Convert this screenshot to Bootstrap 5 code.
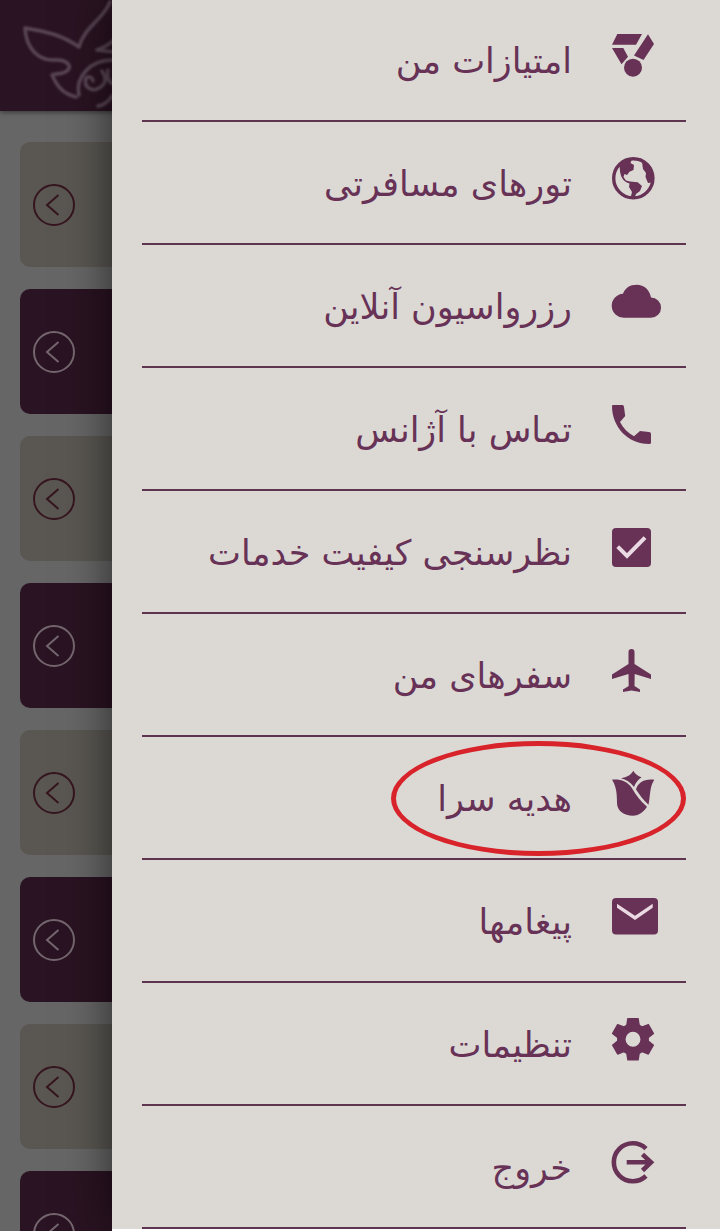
<!DOCTYPE html>
<html lang="fa">
<head>
<meta charset="utf-8">
<meta name="viewport" content="width=device-width, initial-scale=1">
<title>منو</title>
<link rel="stylesheet" href="https://cdn.jsdelivr.net/npm/bootstrap@5.3.0/dist/css/bootstrap.min.css">
<style>
:root { --plum: #673256; --plum-dim: #2a1322; }
body { background: #666; font-family: "DejaVu Sans", sans-serif; }
.app-shell { min-height: 100vh; }
.backdrop-page { inset: 0; }
.app-header { height: 111px; background: var(--plum-dim); box-shadow: 0 1px 5px #333; }
.tile-list { padding: 31px 20px 0; gap: 22px; }
.tile { height: 125px; padding: 0 13px; border-radius: 10px; background: #5a5752; color: #35151f; }
.tile:nth-child(even) { background: var(--plum-dim); color: #74666e; }
.drawer { margin-left: 112px; padding: 0 34px 0 30px; background: #dcd9d5; border-bottom: 2px solid #fff; box-shadow: 0 0 44px rgba(0,0,0,.6); }
.menu-list { margin-top: -1px; }
.menu-row { height: 123px; gap: 40px; border-bottom: 2px solid #5d3550; color: var(--plum); font-size: 35px; line-height: 50px; }
.menu-text { padding-top: 3px; }
.menu-icon { width: 74px; }
.menu-icon svg { overflow: visible; }
.marker-ring { top: 4px; right: 0; width: 295px; height: 115px; border: 5px solid #d8232a; border-radius: 50%; pointer-events: none; }
</style>
</head>
<body>
<svg class="d-none">
  <symbol id="back" viewBox="0 0 42 42"><g fill="none" stroke="currentColor" stroke-width="2"><circle cx="21" cy="21" r="20"/><path d="M25.500 11 14 21l11.500 10"/></g></symbol>
</svg>
<div class="app-shell position-relative overflow-hidden">
  <div class="backdrop-page position-absolute overflow-hidden">
    <header class="app-header">
      <svg width="130" height="111" viewBox="0 0 130 111" aria-hidden="true">
        <defs><filter id="glow"><feGaussianBlur stdDeviation="1.200"/></filter></defs>
        <g fill="none" stroke="#5a4756" stroke-width="3.500" stroke-linecap="round" stroke-linejoin="round" filter="url(#glow)">
          <path d="M110 2C104 19 84 27 79 47 62 35 48 32 25 28 26 48 38 61 55 60 68 59 74 68 65 72 60 75 53 73 52 75 58 88 64 94 76 97"/>
          <path d="M79 95C75 78 90 59 114 60M97 50Q108 46 114 40M97 50l17 2"/>
          <path d="M86 78C83 88 93 92 99 88 106 84 107 79 102 71M86 78q6-3 7 3M108 70q-2 12 6 14M98 106Q106 105 112 96"/>
        </g>
      </svg>
    </header>
    <div class="tile-list d-flex flex-column">
      <a href="#" class="tile d-flex align-items-center" aria-label="بازگشت"><svg width="42" height="42"><use href="#back"/></svg></a>
      <a href="#" class="tile d-flex align-items-center" aria-label="بازگشت"><svg width="42" height="42"><use href="#back"/></svg></a>
      <a href="#" class="tile d-flex align-items-center" aria-label="بازگشت"><svg width="42" height="42"><use href="#back"/></svg></a>
      <a href="#" class="tile d-flex align-items-center" aria-label="بازگشت"><svg width="42" height="42"><use href="#back"/></svg></a>
      <a href="#" class="tile d-flex align-items-center" aria-label="بازگشت"><svg width="42" height="42"><use href="#back"/></svg></a>
      <a href="#" class="tile d-flex align-items-center" aria-label="بازگشت"><svg width="42" height="42"><use href="#back"/></svg></a>
      <a href="#" class="tile d-flex align-items-center" aria-label="بازگشت"><svg width="42" height="42"><use href="#back"/></svg></a>
      <a href="#" class="tile d-flex align-items-center" aria-label="بازگشت"><svg width="42" height="42"><use href="#back"/></svg></a>
    </div>
  </div>

  <nav class="drawer position-relative" dir="rtl">
    <div class="menu-list d-flex flex-column">
      <a href="#" class="menu-row d-flex align-items-center text-decoration-none">
        <span class="menu-icon d-flex justify-content-end"><svg width="50" height="61" viewBox="0 0 50 61" fill="currentColor"><path d="M5.300 5H30L24 15.700H0zM36 5.300 42 15 31.500 31 22 26.500zM0 19H11.300L16 27.700 9.500 35.300z"/><circle cx="21" cy="38.700" r="10.500" fill="#dcd9d5"/><circle cx="21" cy="38.700" r="9"/></svg></span>
        <span class="menu-text">امتیازات من</span></a>
      <a href="#" class="menu-row d-flex align-items-center text-decoration-none">
        <span class="menu-icon d-flex justify-content-end"><svg width="50" height="61" viewBox="0 0 50 61" fill="currentColor"><circle cx="21.300" cy="26.300" r="19.600" fill="none" stroke="currentColor" stroke-width="3.400"/><path d="M7.500 12 13 7.500 20 7 18.500 11 22 13 21.500 18 17.500 19.700 15 23 12.500 22 11.500 25 14 28.500 18 29.500 25.700 30.300 30 34 28 39 24 42 22.500 46H18.500L20 40 17 35 17.500 31.500C12 30 9 26 8 19.500zM19 6 24 8.500 30 6.500zM30 10 37 12 42 22 40 30.500 36 31 33.500 25 34 21 31 17z"/></svg></span>
        <span class="menu-text">تورهای مسافرتی</span></a>
      <a href="#" class="menu-row d-flex align-items-center text-decoration-none">
        <span class="menu-icon d-flex justify-content-end"><svg width="50" height="61" viewBox="0 0 50 61" fill="currentColor"><path d="M12.500 42.700A12 12 0 0 1 11 18.700C13 13 18 9.700 24.700 9.700 32 9.700 38 15 39 22.600A10.050 10.050 0 0 1 39 42.700z"/></svg></span>
        <span class="menu-text">رزرواسیون آنلاین</span></a>
      <a href="#" class="menu-row d-flex align-items-center text-decoration-none">
        <span class="menu-icon d-flex justify-content-end"><svg width="50" height="61" viewBox="0 0 50 61" fill="currentColor"><path d="M1 7H10.500Q11.700 7 12 9L13.200 18 8 24C11 30 16 35 22 38.300L28 33 37 34Q39 34 39 36V45Q39 46 37 46C16 46 0 29 0 8Q0 7 1 7z"/></svg></span>
        <span class="menu-text">تماس با آژانس</span></a>
      <a href="#" class="menu-row d-flex align-items-center text-decoration-none">
        <span class="menu-icon d-flex justify-content-end"><svg width="50" height="61" viewBox="0 0 50 61" fill="currentColor"><rect y="7" width="39" height="39" rx="4"/><path d="M5.700 25.700 15 35 33 16.700" fill="none" stroke="#ead9e2" stroke-width="4"/></svg></span>
        <span class="menu-text">نظرسنجی کیفیت خدمات</span></a>
      <a href="#" class="menu-row d-flex align-items-center text-decoration-none">
        <span class="menu-icon d-flex justify-content-end"><svg width="50" height="61" viewBox="0 0 50 61" fill="currentColor"><path d="M16.500 8a3 3 0 0 1 6 0V20L39 30.500V35L22.700 30 22.500 42 28 45.500V48L19.500 46.500 11 48V45.500L16.700 42 16.500 30 0 35V30.500L16.500 20z"/></svg></span>
        <span class="menu-text">سفرهای من</span></a>
      <a href="#" class="menu-row position-relative d-flex align-items-center text-decoration-none">
        <span class="menu-icon d-flex justify-content-end"><svg width="50" height="61" viewBox="0 0 50 61" fill="currentColor"><path d="M21.300 3.700C23 7 26 9 29.500 10.300 26 13 23.500 15.500 22 20 18.500 15.500 14 12.500 9 11.300 15 10 19 8 21.300 3.700z"/><path d="M0 12.700C9 12 15 14.500 19.500 20.500 24 28 28.500 34.500 35 39.700 31 46 26 48.700 21 48.700 12 48.700 5 44 5 36 5 25 4 19 0 12.700z"/><path d="M42.300 12.700C37.500 20 38.500 28 36.500 37.700 31 33 27.500 27.500 24 22.500 26 15.500 32 11.500 42.300 12.700z"/></svg></span>
        <span class="menu-text">هدیه سرا</span>
        <span class="marker-ring position-absolute"></span></a>
      <a href="#" class="menu-row d-flex align-items-center text-decoration-none">
        <span class="menu-icon d-flex justify-content-end"><svg width="50" height="61" viewBox="0 0 50 61" fill="currentColor"><rect y="8" width="46" height="36.500" rx="4"/><path d="M5 13.800 23 25.700 40.700 13.800V17.800L23 30 5 17.800z" fill="#ead9e2"/></svg></span>
        <span class="menu-text">پیغامها</span></a>
      <a href="#" class="menu-row d-flex align-items-center text-decoration-none">
        <span class="menu-icon d-flex justify-content-end"><svg width="50" height="61" viewBox="0 0 50 61"><g transform="translate(21 26.300)"><g fill="currentColor"><path id="tooth" d="M-5-21.300H5Q5.700-21.300 5.800-20.800L7-13H-7L-5.800-20.800Q-5.700-21.300-5-21.300z"/><use href="#tooth" transform="rotate(60)"/><use href="#tooth" transform="rotate(120)"/><use href="#tooth" transform="rotate(180)"/><use href="#tooth" transform="rotate(240)"/><use href="#tooth" transform="rotate(300)"/></g><circle r="11.700" fill="none" stroke="currentColor" stroke-width="8.500"/></g></svg></span>
        <span class="menu-text">تنظیمات</span></a>
      <a href="#" class="menu-row d-flex align-items-center text-decoration-none">
        <span class="menu-icon d-flex justify-content-end"><svg width="50" height="61" viewBox="0 0 50 61" fill="none" stroke="currentColor" stroke-width="4.600"><path d="M34 12.600A19 19 0 1 0 34 40M14.700 26.300H39M30.500 18.300 39 26.300 30.500 34.500"/></svg></span>
        <span class="menu-text">خروج</span></a>
    </div>
  </nav>
</div>
<script src="https://cdn.jsdelivr.net/npm/bootstrap@5.3.0/dist/js/bootstrap.bundle.min.js"></script>
</body>
</html>
